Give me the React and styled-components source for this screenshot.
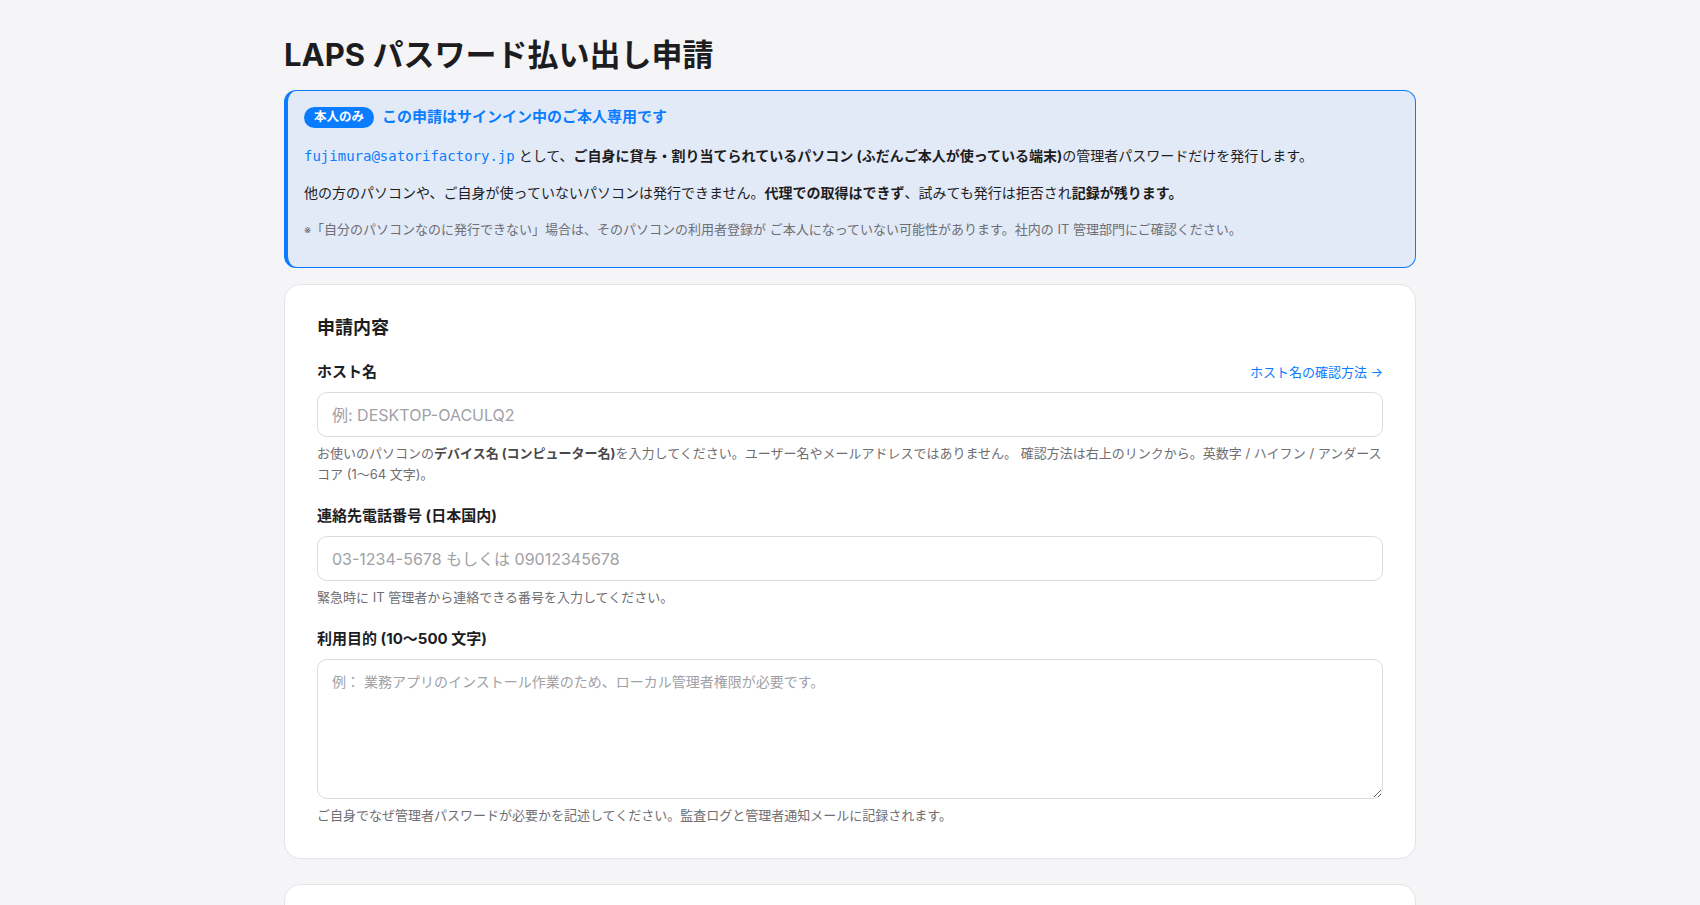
import React from "react";
import styled, { createGlobalStyle } from "styled-components";

const GlobalStyle = createGlobalStyle`
  html, body {
    margin: 0;
    padding: 0;
    background: #f5f5f7;
  }
  body {
    font-family: Inter, "Noto Sans CJK JP", "Noto Sans", sans-serif;
    color: #1d1d1f;
    -webkit-font-smoothing: antialiased;
  }
  * { box-sizing: border-box; }
`;

const Page = styled.main`
  padding: 36px 20px 64px;
`;

const Container = styled.div`
  max-width: 1132px;
  margin: 0 auto;
  display: flex;
  flex-direction: column;
`;

const Title = styled.h1`
  margin: 0 0 16px;
  font-size: 31px;
  line-height: 38px;
  font-weight: 700;
  color: #1d1d1f;
`;

const Notice = styled.section`
  background: #e2eaf7;
  border: 1px solid #0a7cff;
  border-left-width: 4px;
  border-radius: 12px;
  padding: 15px 20px 26px 16px;
  margin-bottom: 16px;
`;

const NoticeHead = styled.div`
  display: flex;
  align-items: center;
  gap: 8px;
  margin-bottom: 17px;
`;

const Badge = styled.span`
  display: inline-flex;
  align-items: center;
  height: 21px;
  padding: 0 10px;
  border-radius: 999px;
  background: #0a7cff;
  color: #fff;
  font-size: 12.5px;
  font-weight: 700;
  line-height: 1;
`;

const NoticeTitle = styled.span`
  color: #0a7cff;
  font-size: 15px;
  font-weight: 700;
  line-height: 22px;
`;

const NoticeText = styled.p`
  margin: 0 0 15px;
  font-size: 14px;
  line-height: 22px;
  color: #1d1d1f;
  strong { font-weight: 700; }
`;

const NoticeNote = styled.p`
  margin: 0;
  font-size: 13px;
  line-height: 21px;
  color: #6e6e73;
`;

const NoteMark = styled.span`
  font-size: 11px;
`;

const Email = styled.code`
  font-family: "DejaVu Sans Mono", "Liberation Mono", monospace;
  font-size: 14px;
  color: #0a7cff;
  font-weight: 500;
`;

const Card = styled.section`
  background: #fff;
  border: 1px solid #e3e3e8;
  border-radius: 16px;
  padding: 32px;
  margin-bottom: 25px;
  display: flex;
  flex-direction: column;
  gap: 20px;
`;

const CardTitle = styled.h2`
  margin: 0 0 2px;
  font-size: 18px;
  line-height: 22px;
  font-weight: 600;
  color: #1d1d1f;
`;

const Field = styled.div`
  display: flex;
  flex-direction: column;
`;

const LabelRow = styled.div`
  display: flex;
  align-items: center;
  justify-content: space-between;
  margin-bottom: 9px;
`;

const Label = styled.label`
  font-size: 15px;
  line-height: 22px;
  font-weight: 700;
  color: #1d1d1f;
`;

const HelpLink = styled.a`
  font-size: 13px;
  line-height: 20px;
  color: #0a7cff;
  text-decoration: none;
`;

const fieldBase = `
  width: 100%;
  border: 1px solid #dcdce0;
  border-radius: 10px;
  background: #fff;
  color: #1d1d1f;
  font-family: Inter, "Noto Sans CJK JP", sans-serif;
  outline: none;
  &::placeholder { color: #a1a1a6; }
`;

const Input = styled.input`
  ${fieldBase}
  padding: 12px 14px;
  font-size: 16px;
  line-height: 19px;
  height: 45px;
`;

const TextArea = styled.textarea`
  ${fieldBase}
  padding: 11px 14px;
  font-size: 14px;
  line-height: 21px;
  height: 140px;
  resize: vertical;
  display: block;
`;

const Help = styled.p`
  margin: 6px 0 0;
  font-size: 13px;
  line-height: 21px;
  color: #6e6e73;
  strong { font-weight: 700; color: #48484a; }
`;

const Placeholder = styled.div`
  height: 120px;
`;

export default function App() {
  return (
    <>
      <GlobalStyle />
      <Page>
        <Container>
          <Title>LAPS パスワード払い出し申請</Title>

          <Notice>
            <NoticeHead>
              <Badge>本人のみ</Badge>
              <NoticeTitle>この申請はサインイン中のご本人専用です</NoticeTitle>
            </NoticeHead>
            <NoticeText>
              <Email>fujimura@satorifactory.jp</Email> として、
              <strong>ご自身に貸与・割り当てられているパソコン (ふだんご本人が使っている端末)</strong>
              の管理者パスワードだけを発行します。
            </NoticeText>
            <NoticeText>
              他の方のパソコンや、ご自身が使っていないパソコンは発行できません。
              <strong>代理での取得はできず</strong>、試みても発行は拒否され
              <strong>記録が残ります。</strong>
            </NoticeText>
            <NoticeNote>
              <NoteMark>※</NoteMark>「自分のパソコンなのに発行できない」場合は、そのパソコンの利用者登録が ご本人になっていない可能性があります。社内の IT 管理部門にご確認ください。
            </NoticeNote>
          </Notice>

          <Card>
            <CardTitle>申請内容</CardTitle>

            <Field>
              <LabelRow>
                <Label htmlFor="host">ホスト名</Label>
                <HelpLink href="#">ホスト名の確認方法 →</HelpLink>
              </LabelRow>
              <Input id="host" placeholder="例: DESKTOP-OACULQ2" />
              <Help>
                お使いのパソコンの<strong>デバイス名 (コンピューター名)</strong>を入力してください。ユーザー名やメールアドレスではありません。 確認方法は右上のリンクから。英数字 / ハイフン / アンダースコア (1〜64 文字)。
              </Help>
            </Field>

            <Field>
              <LabelRow>
                <Label htmlFor="tel">連絡先電話番号 (日本国内)</Label>
              </LabelRow>
              <Input id="tel" placeholder="03-1234-5678 もしくは 09012345678" />
              <Help>緊急時に IT 管理者から連絡できる番号を入力してください。</Help>
            </Field>

            <Field>
              <LabelRow>
                <Label htmlFor="purpose">利用目的 (10〜500 文字)</Label>
              </LabelRow>
              <TextArea
                id="purpose"
                placeholder="例： 業務アプリのインストール作業のため、ローカル管理者権限が必要です。"
              />
              <Help>ご自身でなぜ管理者パスワードが必要かを記述してください。監査ログと管理者通知メールに記録されます。</Help>
            </Field>
          </Card>

          <Card>
            <CardTitle>確認</CardTitle>
            <Placeholder />
          </Card>
        </Container>
      </Page>
    </>
  );
}
